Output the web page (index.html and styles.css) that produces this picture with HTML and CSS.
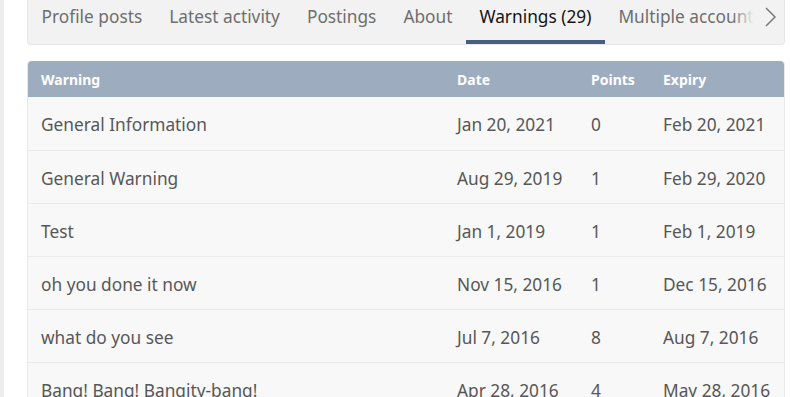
FILE: index.html
```html
<!DOCTYPE html>
<html lang="en">
<head>
    <meta charset="UTF-8">
    <title>Warnings</title>
    <link rel="stylesheet" href="styles.css">
</head>
<body>
    <div class="page">
        <div class="tabs">
            <div class="tabs-list">
                <a class="tab">Profile posts</a>
                <a class="tab">Latest activity</a>
                <a class="tab">Postings</a>
                <a class="tab">About</a>
                <a class="tab is-active">Warnings (29)</a>
                <a class="tab">Multiple accounts</a>
                <a class="tab">Trophies</a>
            </div>
            <span class="tabs-next">
                <svg width="13" height="20" viewBox="0 0 13 20"><path d="M2 1l9 9-9 9" fill="none" stroke="#7a7a7a" stroke-width="1.5"/></svg>
            </span>
        </div>

        <div class="block">
            <table class="warnings">
                <thead>
                    <tr>
                        <th class="col-title">Warning</th>
                        <th class="col-date">Date</th>
                        <th class="col-points">Points</th>
                        <th class="col-expiry">Expiry</th>
                    </tr>
                </thead>
                <tbody>
                    <tr><td>General Information</td><td>Jan 20, 2021</td><td>0</td><td>Feb 20, 2021</td></tr>
                    <tr><td>General Warning</td><td>Aug 29, 2019</td><td>1</td><td>Feb 29, 2020</td></tr>
                    <tr><td>Test</td><td>Jan 1, 2019</td><td>1</td><td>Feb 1, 2019</td></tr>
                    <tr><td>oh you done it now</td><td>Nov 15, 2016</td><td>1</td><td>Dec 15, 2016</td></tr>
                    <tr><td>what do you see</td><td>Jul 7, 2016</td><td>8</td><td>Aug 7, 2016</td></tr>
                    <tr><td>Bang! Bang! Bangity-bang!</td><td>Apr 28, 2016</td><td>4</td><td>May 28, 2016</td></tr>
                </tbody>
            </table>
        </div>
    </div>
</body>
</html>
```

FILE: styles.css
```css
*{
    margin: 0;
    padding: 0;
    box-sizing: border-box;
}
body{
    font-family: "Noto Sans", "Open Sans", sans-serif;
    background: #fff;
    border-left: 4px solid #ececec;
    height: 397px;
    overflow: hidden;
}
.page{
    padding: 0 5px 0 23px;
}

/* tab strip */
.tabs{
    position: relative;
    height: 45px;
    background: #f2f2f2;
    border: 1px solid #e6e6e6;
    border-top: 0;
    border-radius: 0 0 4px 4px;
    overflow: hidden;
}
.tabs-list{
    display: flex;
    white-space: nowrap;
}
.tab{
    display: block;
    padding: 0 13.5px;
    height: 44px;
    line-height: 34px;
    font-size: 17.3px;
    color: #6e6e6e;
    border-bottom: 4px solid transparent;
    cursor: pointer;
}
.tab.is-active{
    color: #141414;
    border-bottom-color: #47607f;
}
/* scroll button, fades out the tab under it */
.tabs-next{
    position: absolute;
    top: 0;
    right: 0;
    width: 52px;
    height: 40px;
    padding: 7px 0 0 32px;
    background: linear-gradient(to right, rgba(242,242,242,0) 0, #f2f2f2 22px);
}

/* warnings table */
.block{
    margin-top: 16px;
    border: 1px solid #e9e9e9;
    border-top: 0;
    border-radius: 4px 4px 0 0;
}
.warnings{
    width: 100%;
    border-collapse: separate;
    border-spacing: 0;
    font-size: 17.3px;
    color: #575757;
}
.warnings th{
    height: 36px;
    background: #9dacbf;
    color: #fff;
    font-size: 14px;
    font-weight: bold;
    text-align: left;
    padding: 1px 13px 0;
}
.warnings th:first-child{
    border-top-left-radius: 4px;
}
.warnings th:last-child{
    border-top-right-radius: 4px;
}
.warnings td{
    height: 53px;
    padding: 2px 13px 0;
    background: #f8f8f8;
    border-top: 1px solid #e9e9e9;
    white-space: nowrap;
}
.warnings tbody tr:first-child td{
    border-top: 0;
}
.col-date{
    width: 134px;
}
.col-points{
    width: 72px;
}
.col-expiry{
    width: 134px;
}
```
